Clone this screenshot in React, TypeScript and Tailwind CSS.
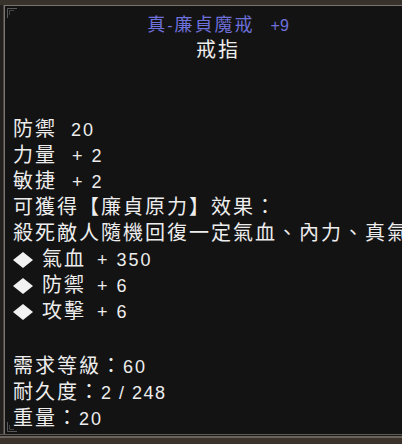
import React from "react";

const cjk = "font-['Noto_Sans_CJK_TC','Noto_Sans_CJK_SC',sans-serif]";

function Num({ children, className = "" }: { children: React.ReactNode; className?: string }) {
  return (
    <span className={`font-['Liberation_Sans',Arial,sans-serif] text-[18px] leading-[20px] ${className}`}>
      {children}
    </span>
  );
}

function Row({ children }: { children: React.ReactNode }) {
  return <div className="h-[26px] leading-[26px] whitespace-nowrap">{children}</div>;
}

function Stat({ label, value, gap }: { label: string; value: string; gap: string }) {
  return (
    <Row>
      <span>{label}</span>
      <Num className={gap}>{value}</Num>
    </Row>
  );
}

function Diamond() {
  return (
    <svg width="20" height="16" viewBox="0 0 20 16" className="inline-block align-[-2px]">
      <polygon points="10,0 20,8 10,16 0,8" fill="#f2f2f2" />
    </svg>
  );
}

function Bullet({ label, value }: { label: string; value: string }) {
  return (
    <Row>
      <Diamond />
      <span className="ml-[9px]">{label}</span>
      <Num className="ml-[11px]">{value}</Num>
    </Row>
  );
}

function Corner({ flip }: { flip?: boolean }) {
  return (
    <svg width="10" height="10" viewBox="0 0 10 10">
      {flip ? (
        <g fill="none">
          <path d="M0.5 0 V9.5 H10" stroke="#5a5a5a" />
          <path d="M2.5 3 V7.5 H7" stroke="#444444" />
        </g>
      ) : (
        <g fill="none">
          <path d="M0.5 10 V0.5 H10" stroke="#5a5a5a" />
          <path d="M2.5 7 V2.5 H7" stroke="#444444" />
        </g>
      )}
    </svg>
  );
}

export default function App() {
  return (
    <div className="w-[402px] h-[444px] overflow-hidden bg-[#2c2723] flex flex-col">
      <div className="h-[5px] bg-[#38322c] shrink-0" />
      <div className="flex shrink-0">
        <div className="w-[3px] shrink-0 bg-[#231f1c]" />
        <div className="w-[1px] shrink-0 bg-[#4a4540]" />
        <div
          className={`relative shrink-0 w-[427px] h-[429px] border-t border-l border-[#7a7570] bg-[#131313] pt-[4px] pl-[8px] pr-[8px] text-[20px] tracking-[2px] text-[#ededed] ${cjk}`}
        >
          <div className="absolute left-[2px] top-[2px]">
            <Corner />
          </div>
          <div className="absolute left-[2px] bottom-[2px]">
            <Corner flip />
          </div>

          <div className="flex justify-center items-baseline h-[26px] leading-[26px] whitespace-nowrap text-[#6e70dc]">
            <span className="text-[18px] tracking-[2px]">真</span>
            <span className="font-['Liberation_Sans',Arial,sans-serif] text-[16px] tracking-[2px]">-</span>
            <span className="text-[18px] tracking-[2px]">廉貞魔戒</span>
            <span className="ml-[16px] font-['Liberation_Sans',Arial,sans-serif] text-[16px] tracking-[0px]">+9</span>
          </div>
          <div className="h-[26px] leading-[26px] text-center whitespace-nowrap">戒指</div>

          <div className="h-[53px]" />

          <Stat label="防禦" value="20" gap="ml-[14px]" />
          <Stat label="力量" value="+ 2" gap="ml-[15px]" />
          <Stat label="敏捷" value="+ 2" gap="ml-[15px]" />
          <Row>可獲得【廉貞原力】效果：</Row>
          <Row>殺死敵人隨機回復一定氣血、內力、真氣</Row>
          <Bullet label="氣血" value="+ 350" />
          <Bullet label="防禦" value="+ 6" />
          <Bullet label="攻擊" value="+ 6" />

          <div className="h-[29px]" />

          <Row>
            <span>需求等級：</span>
            <Num>60</Num>
          </Row>
          <Row>
            <span>耐久度：</span>
            <Num className="tracking-[1.5px]">2 / 248</Num>
          </Row>
          <Row>
            <span>重量：</span>
            <Num>20</Num>
          </Row>
        </div>
      </div>
      <div className="h-[1px] bg-[#5e5a56] shrink-0" />
      <div className="h-[1px] bg-[#1c1a18] shrink-0" />
      <div className="h-[2px] bg-[#6a635c] shrink-0" />
      <div className="flex-1 bg-[#3a322b]" />
    </div>
  );
}
